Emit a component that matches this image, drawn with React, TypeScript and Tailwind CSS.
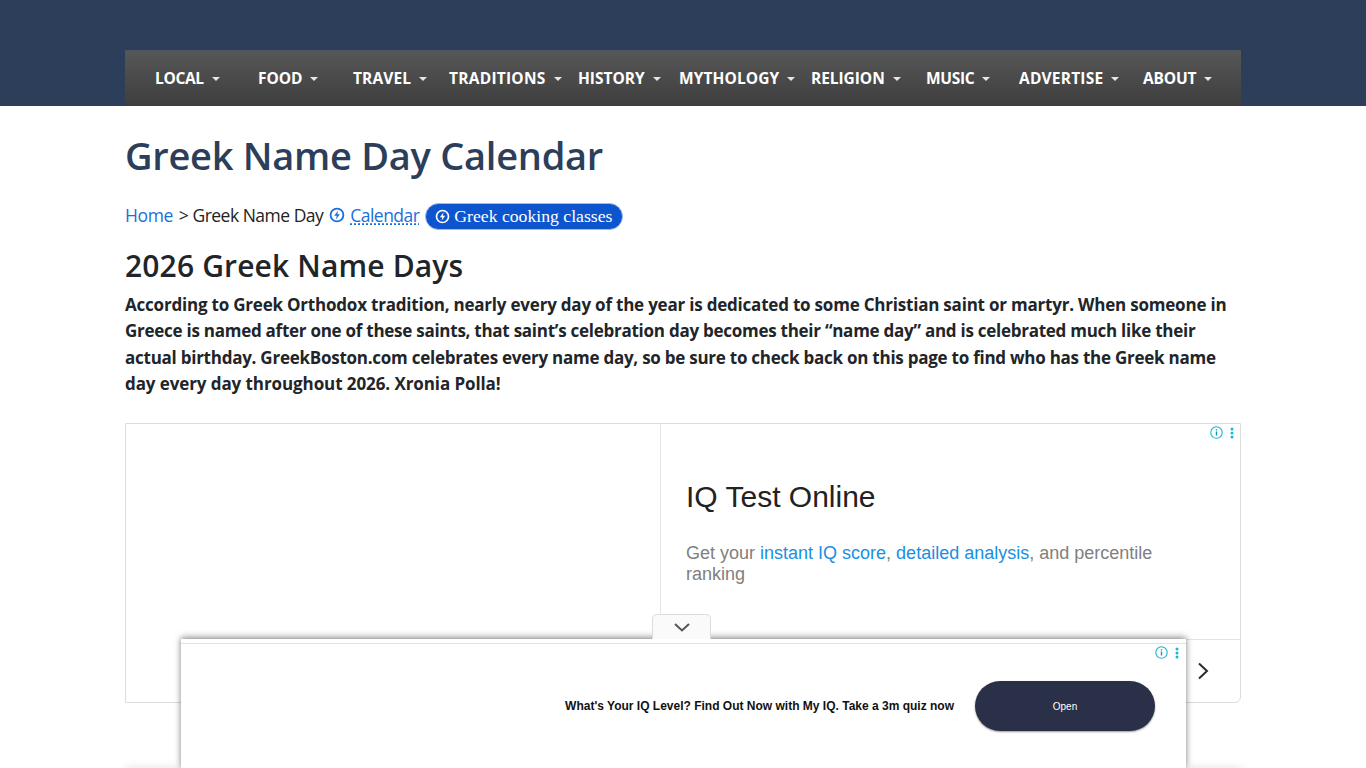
import React from "react";

const F = "font-['Open_Sans','Noto_Sans',sans-serif]";
const nav: [string, string, string][] = [
  ["LOCAL", "w-[103px]", "tracking-[-0.35px]"],
  ["FOOD", "w-[95px]", "tracking-[-0.05px]"],
  ["TRAVEL", "w-[96px]", "tracking-[0.1px]"],
  ["TRADITIONS", "w-[129px]", "tracking-[0.25px]"],
  ["HISTORY", "w-[101px]", "tracking-[0px]"],
  ["MYTHOLOGY", "w-[132px]", "tracking-[0.1px]"],
  ["RELIGION", "w-[115px]", "tracking-[-0.05px]"],
  ["MUSIC", "w-[93px]", "tracking-[-0.3px]"],
  ["ADVERTISE", "w-[124px]", "tracking-[0.2px]"],
  ["ABOUT", "w-[68px]", "tracking-[-0.15px]"],
];

function Bolt({ className }: { className: string }) {
  return (
    <svg viewBox="0 0 16 16" className={className} fill="none" stroke="currentColor">
      <circle cx="8" cy="8" r="6.4" strokeWidth="1.8" />
      <path d="M9.2 3.4 5.2 8.8h2.6L6.9 12.6l4-5.4H8.3z" fill="currentColor" stroke="none" />
    </svg>
  );
}

function AdChoices() {
  return (
    <div className="flex items-center gap-[7px] text-[#19b5d6]">
      <svg viewBox="0 0 13 13" className="w-[13px] h-[13px]" fill="none" stroke="currentColor">
        <circle cx="6.5" cy="6.5" r="5.7" strokeWidth="1.1" />
        <path d="M6.5 5.6v4M6.5 3.2v1.3" strokeWidth="1.4" stroke="#1c8fb0" />
      </svg>
      <svg viewBox="0 0 4 12" className="w-1 h-3" fill="currentColor">
        <circle cx="2" cy="2" r="1.5" />
        <circle cx="2" cy="6" r="1.5" />
        <circle cx="2" cy="10" r="1.5" />
      </svg>
    </div>
  );
}

export default function App() {
  return (
    <div className={`relative h-[768px] overflow-hidden bg-white ${F}`}>
      <header className="h-[106px] bg-[#2c3e5a] pt-[50px]">
        <nav className="mx-[125px] w-[1116px] h-14 pl-[30px] flex items-center bg-gradient-to-b from-[#565656] to-[#3e3e3e] border-t-2 border-[#4c5560]">
          {nav.map(([label, w, t]) => (
            <div key={label} className={`${w} ${t} shrink-0 flex items-center gap-2 text-white text-[15.5px] font-bold leading-none whitespace-nowrap`}>
              <span>{label}</span>
              <span className="w-0 h-0 border-x-[4px] border-x-transparent border-t-[4px] border-t-[#e6e6e6]" />
            </div>
          ))}
        </nav>
      </header>

      <main className="mx-[125px] w-[1116px]">
        <h1 className="mt-[23px] text-[38px] leading-[52px] font-semibold tracking-[-0.27px] text-[#2c3e5a] whitespace-nowrap">Greek Name Day Calendar</h1>

        <div className="mt-[20px] h-[28px] flex items-center text-[17.5px] tracking-[-0.5px] text-[#222] whitespace-nowrap">
          <span className="text-[#1a6fd8] tracking-[-0.4px]">Home</span>
          <span className="ml-[6px]">&gt; Greek Name Day</span>
          <Bolt className="w-[16px] h-[16px] ml-[6px] text-[#1a6fd8]" />
          <span className="ml-[5px] text-[#1a6fd8] tracking-[-0.55px] underline decoration-dotted decoration-[#1a6fd8] underline-offset-2">Calendar</span>
          <span className="ml-[6px] mt-[2px] h-[27px] w-[198px] rounded-full bg-[#0d55cf] border border-[#9dbcf0] text-white flex items-center pl-[9px] gap-[4px] font-['Liberation_Serif',serif] text-[17.7px] tracking-normal">
            <Bolt className="w-[15px] h-[15px]" />
            Greek cooking classes
          </span>
        </div>

        <h2 className="mt-[16px] text-[30px] leading-[42px] font-semibold tracking-[0.15px] text-[#212529] whitespace-nowrap">2026 Greek Name Days</h2>

        <div className="mt-[5px] text-[17px] leading-[26.3px] font-bold text-[#212529]">
          <p className="whitespace-nowrap tracking-[-0.21px]">According to Greek Orthodox tradition, nearly every day of the year is dedicated to some Christian saint or martyr. When someone in</p>
          <p className="whitespace-nowrap tracking-[-0.26px]">Greece is named after one of these saints, that saint’s celebration day becomes their “name day” and is celebrated much like their</p>
          <p className="whitespace-nowrap tracking-[-0.25px]">actual birthday. GreekBoston.com celebrates every name day, so be sure to check back on this page to find who has the Greek name</p>
          <p className="whitespace-nowrap tracking-[-0.09px]">day every day throughout 2026. Xronia Polla!</p>
        </div>

        <section className="relative mt-[26px] h-[280px] border border-[#dcdcdc] rounded-br-[6px] flex">
          <div className="w-[535px] border-r border-[#e4e4e4] shrink-0" />
          <div className="flex-1 flex flex-col font-['Liberation_Sans',sans-serif]">
            <div className="h-[216px] border-b border-[#e4e4e4] pl-[25px] pr-[80px]">
              <div className="mt-[55px] text-[30px] leading-[36px] text-[#222]">IQ Test Online</div>
              <p className="mt-[28px] text-[18px] leading-[21px] text-[#808080]">
                Get your <span className="text-[#1a8fe3]">instant IQ score</span>, <span className="text-[#1a8fe3]">detailed analysis</span>, and percentile ranking
              </p>
            </div>
            <div className="flex-1 flex items-center justify-end pr-[31px]">
              <svg viewBox="0 0 12 18" className="w-[12px] h-[18px]" fill="none" stroke="#2a2a2a" strokeWidth="2">
                <path d="M2 1.5 10 9l-8 7.5" />
              </svg>
            </div>
          </div>
          <div className="absolute top-[2px] right-[6px]"><AdChoices /></div>
        </section>
      </main>

      {/* faint shadow of the page block under the sticky ad */}
      <div className="absolute left-[125px] top-[768px] w-[1116px] h-4 shadow-[0_0_10px_rgba(0,0,0,0.12)]" />

      {/* sticky bottom ad */}
      <div className="absolute left-[181px] top-[639px] w-[1005px] h-[129px] bg-white shadow-[0_-2px_7px_rgba(0,0,0,0.35),0_0_5px_rgba(0,0,0,0.2)] font-['Liberation_Sans',sans-serif]">
        <div className="absolute -top-[25px] left-[471px] w-[59px] h-[25px] bg-[#fafafa] rounded-t-[5px] border border-b-0 border-[#dddddd] flex items-center justify-center">
          <svg viewBox="0 0 16 9" className="w-4 h-[9px]" fill="none" stroke="#555" strokeWidth="2">
            <path d="M1 1l7 6.5L15 1" />
          </svg>
        </div>
        <div className="h-[5px] border-b border-[#e2e2e2]" />
        <div className="absolute top-[7px] right-[7px]"><AdChoices /></div>
        <div className="absolute left-0 right-[31px] top-[42px] flex items-center justify-end gap-[21px]">
          <span className="text-[12px] font-bold text-[#111] whitespace-nowrap">What's Your IQ Level? Find Out Now with My IQ. Take a 3m quiz now</span>
          <span className="w-[180px] h-[50px] rounded-full bg-[#2a3047] text-white text-[10px] flex items-center justify-center shadow-[0_1px_2px_rgba(0,0,0,0.4)]">Open</span>
        </div>
      </div>
    </div>
  );
}
